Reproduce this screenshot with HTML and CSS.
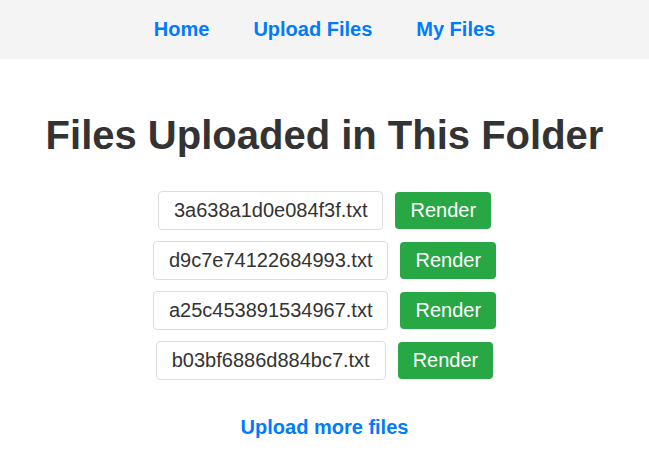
FILE: index.html
```html
<!DOCTYPE html>
<html>
<head>
<meta charset="utf-8">
<link rel="stylesheet" href="styles.css">
</head>
<body>
<nav class="nav">
  <a href="#">Home</a>
  <a href="#">Upload Files</a>
  <a href="#">My Files</a>
</nav>
<main class="main">
  <h1 class="title">Files Uploaded in This Folder</h1>
  <div class="list">
    <div class="row"><span class="file">3a638a1d0e084f3f.txt</span><button class="btn">Render</button></div>
    <div class="row"><span class="file">d9c7e74122684993.txt</span><button class="btn">Render</button></div>
    <div class="row"><span class="file">a25c453891534967.txt</span><button class="btn">Render</button></div>
    <div class="row"><span class="file">b03bf6886d884bc7.txt</span><button class="btn">Render</button></div>
  </div>
  <a class="more" href="#">Upload more files</a>
</main>
</body>
</html>
```
FILE: styles.css
```css
* { box-sizing: border-box; }
body {
  margin: 0;
  font-family: "Liberation Sans", Arial, sans-serif;
  color: #333;
  background: #fff;
}
.nav {
  height: 59px;
  background: #f4f4f4;
  display: flex;
  justify-content: center;
  align-items: center;
  gap: 44px;
}
.nav a {
  color: #007bff;
  font-weight: bold;
  font-size: 20px;
  text-decoration: none;
}
.main {
  display: flex;
  flex-direction: column;
  align-items: center;
}
.title {
  font-size: 40px;
  margin: 53px 0 33px;
  line-height: 1.15;
  color: #333;
}
.list {
  display: flex;
  flex-direction: column;
  gap: 11px;
}
.row {
  display: flex;
  justify-content: center;
  align-items: center;
  gap: 12px;
}
.file {
  border: 1px solid #ddd;
  border-radius: 4px;
  padding: 7px 15px;
  font-size: 20px;
  line-height: 23px;
  color: #333;
}
.btn {
  border: none;
  background: #28a745;
  color: #fff;
  border-radius: 4px;
  padding: 7px 15px;
  font-family: inherit;
  font-size: 20px;
  line-height: 23px;
}
.more {
  margin-top: 36px;
  color: #007bff;
  font-weight: bold;
  font-size: 20px;
  text-decoration: none;
}
```
